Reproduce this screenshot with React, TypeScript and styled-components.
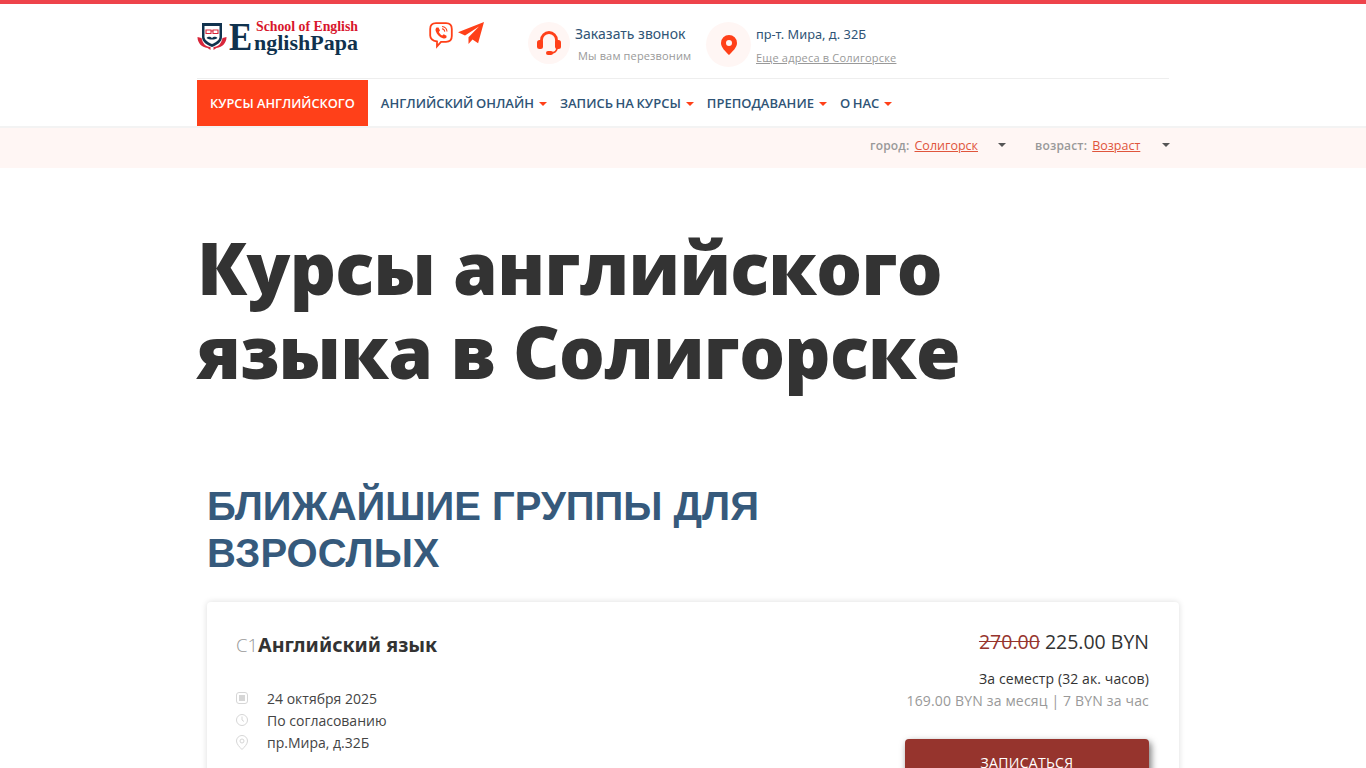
import React, { FC } from 'react';
import styled, { createGlobalStyle } from 'styled-components';

const GlobalStyle = createGlobalStyle`
  html, body {
    margin: 0;
    padding: 0;
    background: #fff;
    font-family: 'Open Sans', sans-serif;
    color: #333;
  }
`;

const Page = styled.div`
  height: 768px;
  overflow: hidden;
  border-top: 4px solid #ee434b;
  box-sizing: border-box;
`;

const Wrap = styled.div`
  width: 972px;
  margin-left: 197px;
`;

//Header
const TopRow = styled.div`
  display: flex;
  height: 74px;
  border-bottom: 1px solid #eee;
  box-sizing: content-box;
`;
const Logo = styled.div`
  width: 232px;
  height: 36px;
  margin-top: 18px;
  display: flex;
`;
const LogoType = styled.div`
  display: flex;
  margin-left: 2px;
  font-family: 'Liberation Serif', serif;
  font-weight: 700;
  color: #10324e;
`;
const LogoBig = styled.span`
  width: 24px;
  font-size: 41px;
  line-height: 28px;
  height: 28px;
  transform: scaleX(0.85);
  transform-origin: left;
`;
const LogoLines = styled.div`
  display: flex;
  flex-direction: column;
  margin-left: 1px;
`;
const LogoSchool = styled.span`
  margin-left: 2px;
  font-size: 13.8px;
  line-height: 10px;
  white-space: nowrap;
  color: #d8162c;
`;
const LogoName = styled.span`
  font-size: 22px;
  line-height: 22px;
  white-space: nowrap;
`;
const Social = styled.div`
  width: 99px;
  display: flex;
  gap: 5px;
  padding-top: 18px;
  align-items: flex-start;
`;
const InfoBlock = styled.div<{ $width: number }>`
  width: ${p => p.$width}px;
  display: flex;
  padding-top: 18px;
`;
const IconCircle = styled.div<{ $size: number }>`
  width: ${p => p.$size}px;
  height: ${p => p.$size}px;
  border-radius: 50%;
  background: #fff6f4;
  display: flex;
  align-items: center;
  justify-content: center;
  flex-shrink: 0;
`;
const InfoText = styled.div`
  margin-left: 5px;
`;
const InfoTitle = styled.div<{ $size: number }>`
  font-family: 'Noto Sans', sans-serif;
  font-size: ${p => p.$size}px;
  line-height: 18px;
  margin-top: 3px;
  color: #2f5476;
`;
const InfoSub = styled.div`
  font-size: 11px;
  line-height: 16px;
  margin: 5px 0 0 3px;
  color: #999;
  letter-spacing: 0.15px;
`;
const InfoLink = styled.a`
  display: block;
  font-size: 11px;
  line-height: 16px;
  margin-top: 7px;
  color: #999;
  text-decoration: underline;
  letter-spacing: 0.2px;
`;

//Nav
const Nav = styled.nav`
  display: flex;
  height: 46px;
  margin-top: 1px;
`;
const NavActive = styled.a`
  display: flex;
  align-items: center;
  padding: 0 13px;
  background: #ff4019;
  color: #fff;
  font-size: 12.8px;
  font-weight: 600;
`;
const NavItem = styled.a`
  display: flex;
  align-items: center;
  padding-left: 13px;
  color: #2f5476;
  font-size: 13px;
  font-weight: 600;
  white-space: nowrap;
  word-spacing: -0.8px;
`;
const Caret = styled.span<{ $color: string }>`
  display: inline-block;
  width: 0;
  height: 0;
  margin-left: 5px;
  margin-top: 2px;
  border-left: 4px solid transparent;
  border-right: 4px solid transparent;
  border-top: 4px solid ${p => p.$color};
`;

//Filters
const FilterBar = styled.div`
  height: 40px;
  background: #fff6f4;
  border-top: 2px solid #f3f3f3;
  box-sizing: content-box;
  display: flex;
  justify-content: flex-end;
  padding-right: 196px;
`;
const Filter = styled.div<{ $width: number; $gap: number }>`
  width: ${p => p.$width}px;
  margin-left: ${p => p.$gap}px;
  height: 18px;
  margin-top: 8px;
  display: flex;
  align-items: center;
  position: relative;
  font-size: 12px;
`;
const FilterLabel = styled.span`
  font-weight: 600;
  color: #999;
  letter-spacing: 0.2px;
`;
const FilterValue = styled.a`
  margin-left: 5px;
  font-size: 12.5px;
  color: #e0553c;
  text-decoration: underline;
`;
const FilterArrow = styled.span`
  position: absolute;
  right: 0;
  top: 7px;
  width: 0;
  height: 0;
  border-left: 4px solid transparent;
  border-right: 4px solid transparent;
  border-top: 4px solid #555;
`;

//Content
const Title = styled.h1`
  margin: 57px 0 0;
  font-size: 72px;
  line-height: 84px;
  letter-spacing: -0.7px;
  font-weight: 800;
  color: #333;
  width: 900px;
`;
const Section = styled.div`
  margin: 90px 0 0 10px;
`;
const SectionTitle = styled.h2`
  margin: 0;
  width: 700px;
  font-family: 'Liberation Sans', sans-serif;
  font-size: 40px;
  line-height: 47px;
  font-weight: 700;
  color: #365a7c;
`;
const Card = styled.div`
  width: 972px;
  height: 260px;
  margin-top: 25px;
  padding: 28px 30px 0 29px;
  box-sizing: border-box;
  background: #fff;
  border-radius: 4px;
  box-shadow: 0 0 6px rgba(0, 0, 0, 0.14);
  display: flex;
  justify-content: space-between;
`;
const CardLeft = styled.div``;
const CourseHead = styled.div`
  display: flex;
  align-items: baseline;
  margin-bottom: 27px;
`;
const Level = styled.span`
  font-size: 18.5px;
  font-weight: 300;
  line-height: 30px;
  color: #999;
`;
const CourseName = styled.span`
  font-family: 'Noto Sans', sans-serif;
  font-size: 19.7px;
  line-height: 30px;
  font-weight: 700;
  color: #333;
`;
const MetaRow = styled.div`
  display: flex;
  align-items: center;
  height: 22px;
  font-size: 14px;
  color: #444;
`;
const MetaIcon = styled.span`
  width: 31px;
  display: flex;
  color: #d6d6d6;
`;
const CardRight = styled.div`
  display: flex;
  flex-direction: column;
  align-items: flex-end;
`;
const Price = styled.div`
  font-size: 19.5px;
  line-height: 26px;
  margin-top: -1px;
  color: #333;
`;
const OldPrice = styled.s`
  color: #96342d;
`;
const PriceNote = styled.div`
  font-size: 14px;
  line-height: 22px;
  margin-top: 13px;
  letter-spacing: 0.1px;
  color: #333;
`;
const PriceSub = styled.div`
  font-size: 14px;
  line-height: 22px;
  letter-spacing: 0.17px;
  color: #999;
`;
const SignUp = styled.button`
  width: 244px;
  height: 46px;
  margin-top: 27px;
  border: none;
  border-radius: 4px;
  background: #96342d;
  color: #fff;
  font-family: 'Open Sans', sans-serif;
  font-size: 14px;
  letter-spacing: 0.3px;
  box-shadow: 2px 3px 7px rgba(0, 0, 0, 0.55);
`;

const Crest: FC = () => (
  <svg width="30" height="30" viewBox="0 0 30 30">
    <path d="M0.500 15c0 6 4 10 10 11l3 2v-3c-5 0-8-4-9-9zM29.500 15c0 6-4 10-10 11l-3 2v-3c5 0 8-4 9-9z" fill="#d8263a" />
    <path d="M5 1h20v14c0 5-5 8-10 10C10 23 5 20 5 15z" fill="#10324e" />
    <path d="M7.500 4h15v11c0 3-4 5.500-7.500 7C11.500 20.500 7.500 18 7.500 15z" fill="#fff" />
    <path d="M9 8h5v3.500H9zM16 8h5v3.500h-5zM14 9h2" fill="none" stroke="#d8263a" strokeWidth="1.100" />
    <path d="M9.500 16c2.500-2 4-1 5.500 0 1.500-1 3-2 5.500 0-3 2-8 2-11 0z" fill="#10324e" />
  </svg>
);

const ViberIcon: FC = () => (
  <svg width="24" height="27" viewBox="0 0 24 27" fill="none" stroke="#ff4019">
    <path d="M7 1.200h10c3.500 0 5.800 2.300 5.800 5.800v7c0 3.500-2.300 5.800-5.800 5.800h-5l-4 4.500v-4.800C4 18.800 1.200 17 1.200 13.500V7C1.200 3.500 3.500 1.200 7 1.200z" strokeWidth="1.800" />
    <path d="M7.500 5.500l2 0 1.500 3-1.200 1.400c.7 1.600 1.900 2.800 3.500 3.500l1.400-1.200 2.800 1.600v1.800c-1 1-2.200 1.200-3.600.7-3.400-1.400-6-4-7.200-7.400-.4-1.300 0-2.600.8-3.400z" fill="#ff4019" stroke="none" />
    <path d="M13 4.500c2.800.3 4.800 2.300 5 5M13 6.800c1.500.2 2.600 1.200 2.800 2.800" strokeWidth="1.100" />
  </svg>
);

const TelegramIcon: FC = () => (
  <svg width="26" height="22" viewBox="0 0 26 22">
    <path d="M26 0L0 10.200l7 3.400L21 4.500 10.500 15.200V22l4-4.600 5.600 3.800z" fill="#ff4019" />
  </svg>
);

const HeadsetIcon: FC = () => (
  <svg width="24" height="26" viewBox="0 0 24 26" fill="none">
    <path d="M4.500 13V10a7.500 7.500 0 0 1 15 0v3" stroke="#ff4019" strokeWidth="2.800" />
    <rect x="0" y="10" width="6" height="9" rx="2.500" fill="#ff4019" />
    <rect x="18" y="10" width="6" height="9" rx="2.500" fill="#ff4019" />
    <path d="M20 18c0 3-2.500 5-6 5" stroke="#ff4019" strokeWidth="1.800" />
    <rect x="9" y="21" width="7" height="4" rx="2" fill="#ff4019" />
  </svg>
);

const PinIcon: FC = () => (
  <svg width="16" height="20" viewBox="0 0 16 20">
    <path fillRule="evenodd" d="M8 0a8 8 0 0 1 8 8c0 4.500-4.500 8.500-8 12C4.500 16.500 0 12.500 0 8a8 8 0 0 1 8-8zm0 5a3 3 0 1 0 0 6 3 3 0 0 0 0-6z" fill="#ff4019" />
  </svg>
);

const CalendarSmall: FC = () => (
  <svg width="12" height="12" viewBox="0 0 12 12">
    <rect x="0.500" y="0.500" width="11" height="11" rx="2.500" fill="none" stroke="currentColor" />
    <rect x="3" y="3" width="6" height="6" fill="currentColor" />
  </svg>
);

const ClockSmall: FC = () => (
  <svg width="12" height="12" viewBox="0 0 12 12" fill="none" stroke="currentColor">
    <circle cx="6" cy="6" r="5.500" />
    <path d="M6 2.500V6l2 1.500" />
  </svg>
);

const PinSmall: FC = () => (
  <svg width="12" height="15" viewBox="0 0 12 15" fill="none" stroke="currentColor">
    <path d="M6 .5a5.500 5.500 0 0 1 5.500 5.500c0 3-3 6-5.500 8.500C3.500 12 .5 9 .5 6A5.500 5.500 0 0 1 6 .5z" />
    <circle cx="6" cy="6" r="2" />
  </svg>
);

const App: FC = () => {
  const navItems = ['АНГЛИЙСКИЙ ОНЛАЙН', 'ЗАПИСЬ НА КУРСЫ', 'ПРЕПОДАВАНИЕ', 'О НАС'];
  return (
    <>
      <GlobalStyle />
      <Page>
        <Wrap>
          <TopRow>
            <Logo>
              <Crest />
              <LogoType>
                <LogoBig>E</LogoBig>
                <LogoLines>
                  <LogoSchool>School of English</LogoSchool>
                  <LogoName>nglishPapa</LogoName>
                </LogoLines>
              </LogoType>
            </Logo>
            <Social>
              <ViberIcon />
              <TelegramIcon />
            </Social>
            <InfoBlock $width={178}>
              <IconCircle $size={42}>
                <HeadsetIcon />
              </IconCircle>
              <InfoText>
                <InfoTitle $size={14}>Заказать звонок</InfoTitle>
                <InfoSub>Мы вам перезвоним</InfoSub>
              </InfoText>
            </InfoBlock>
            <InfoBlock $width={300}>
              <IconCircle $size={45}>
                <PinIcon />
              </IconCircle>
              <InfoText>
                <InfoTitle $size={12.8}>пр-т. Мира, д. 32Б</InfoTitle>
                <InfoLink>Еще адреса в Солигорске</InfoLink>
              </InfoText>
            </InfoBlock>
          </TopRow>
          <Nav>
            <NavActive>КУРСЫ АНГЛИЙСКОГО</NavActive>
            {navItems.map(item => (
              <NavItem key={item}>
                {item}
                <Caret $color="#ff4019" />
              </NavItem>
            ))}
          </Nav>
        </Wrap>
        <FilterBar>
          <Filter $width={136} $gap={0}>
            <FilterLabel>город:</FilterLabel>
            <FilterValue>Солигорск</FilterValue>
            <FilterArrow />
          </Filter>
          <Filter $width={135} $gap={29}>
            <FilterLabel>возраст:</FilterLabel>
            <FilterValue>Возраст</FilterValue>
            <FilterArrow />
          </Filter>
        </FilterBar>
        <Wrap>
          <Title>Курсы английского языка в Солигорске</Title>
          <Section>
            <SectionTitle>БЛИЖАЙШИЕ ГРУППЫ ДЛЯ ВЗРОСЛЫХ</SectionTitle>
            <Card>
              <CardLeft>
                <CourseHead>
                  <Level>C1</Level>
                  <CourseName>Английский язык</CourseName>
                </CourseHead>
                <MetaRow>
                  <MetaIcon><CalendarSmall /></MetaIcon>
                  24 октября 2025
                </MetaRow>
                <MetaRow>
                  <MetaIcon><ClockSmall /></MetaIcon>
                  По согласованию
                </MetaRow>
                <MetaRow>
                  <MetaIcon><PinSmall /></MetaIcon>
                  пр.Мира, д.32Б
                </MetaRow>
              </CardLeft>
              <CardRight>
                <Price>
                  <OldPrice>270.00</OldPrice> 225.00 BYN
                </Price>
                <PriceNote>За семестр (32 ак. часов)</PriceNote>
                <PriceSub>169.00 BYN за месяц | 7 BYN за час</PriceSub>
                <SignUp>ЗАПИСАТЬСЯ</SignUp>
              </CardRight>
            </Card>
          </Section>
        </Wrap>
      </Page>
    </>
  );
};

export default App;
